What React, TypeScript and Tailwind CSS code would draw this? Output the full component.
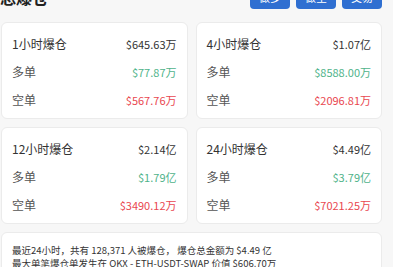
const stats = [
  { title: '1小时爆仓', total: '$645.63万', long: '$77.87万', short: '$567.76万' },
  { title: '4小时爆仓', total: '$1.07亿', long: '$8588.00万', short: '$2096.81万' },
  { title: '12小时爆仓', total: '$2.14亿', long: '$1.79亿', short: '$3490.12万' },
  { title: '24小时爆仓', total: '$4.49亿', long: '$3.79亿', short: '$7021.25万' },
];

function StatCard({ title, total, long, short }: (typeof stats)[number]) {
  return (
    <div className="bg-white border border-[#ebebeb] rounded-md px-[10px] pt-[11px] pb-2 flex flex-col gap-2">
      <div className="flex items-center justify-between h-5 text-[#333]">
        <span className="text-[12px]">{title}</span>
        <span>{total}</span>
      </div>
      <div className="flex items-center justify-between h-5">
        <span className="text-[12px] text-[#555]">多单</span>
        <span className="text-[#4fb38a]">{long}</span>
      </div>
      <div className="flex items-center justify-between h-5">
        <span className="text-[12px] text-[#555]">空单</span>
        <span className="text-[#e9474f]">{short}</span>
      </div>
    </div>
  );
}

export default function App() {
  return (
    <div
      className="h-[267px] overflow-hidden bg-[#f7f7f7] text-[11px] leading-none"
      style={{ fontFamily: '"Noto Sans CJK SC", "Noto Sans", sans-serif' }}
    >
      <div className="-mt-[15px] pl-px pr-[11px]">
        {/* Header */}
        <div className="flex items-center justify-between h-6 mb-[13px]">
          <h2 className="text-[16px] font-bold text-[#222] -ml-px">总爆仓</h2>
          <div className="flex gap-[6px]">
            {['做多', '做空', '交易'].map((b) => (
              <button
                key={b}
                className="w-10 h-6 rounded bg-[#2f6fd1] text-white text-[11px]"
              >
                {b}
              </button>
            ))}
          </div>
        </div>

        {/* Cards */}
        <div className="grid grid-cols-2 gap-x-2 gap-y-2">
          {stats.map((s) => (
            <StatCard key={s.title} {...s} />
          ))}
        </div>

        {/* Summary */}
        <div className="mt-2 bg-white border border-[#ebebeb] rounded-md px-[10px] pt-[11px] pb-3 text-[9.5px] text-[#333] leading-[13px]">
          <p>最近24小时，共有 128,371 人被爆仓， 爆仓总金额为 $4.49 亿</p>
          <p>最大单笔爆仓单发生在 OKX - ETH-USDT-SWAP 价值 $606.70万</p>
        </div>
      </div>
    </div>
  );
}
